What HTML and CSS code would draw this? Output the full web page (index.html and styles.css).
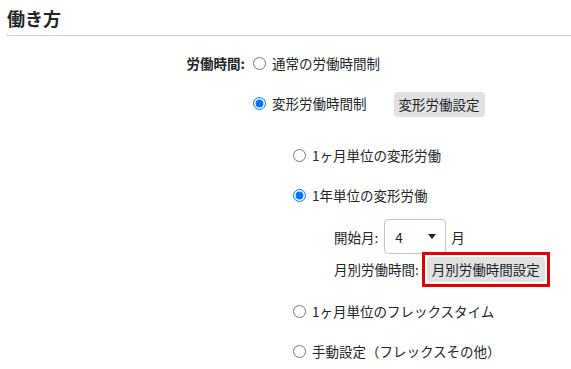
FILE: index.html
```html
<!DOCTYPE html>
<html lang="ja">
<head>
<meta charset="utf-8">
<link rel="stylesheet" href="styles.css">
</head>
<body>
<div class="page">
  <h2 class="title">働き方</h2>
  <div class="form">
    <div class="label">労働時間:</div>
    <div class="field">
      <label class="opt"><input type="radio" name="wt"><span>通常の労働時間制</span></label>
      <div class="opt">
        <label class="opt-inner"><input type="radio" name="wt" checked><span>変形労働時間制</span></label>
        <button class="btn btn-var">変形労働設定</button>
      </div>
      <div class="sub">
        <label class="opt"><input type="radio" name="vt"><span>1ヶ月単位の変形労働</span></label>
        <label class="opt"><input type="radio" name="vt" checked><span>1年単位の変形労働</span></label>
        <div class="detail">
          <div class="drow drow-start">
            <span class="dlabel">開始月:</span>
            <div class="select"><span>4</span><i class="caret"></i></div>
            <span class="unit">月</span>
          </div>
          <div class="drow drow-month">
            <span class="dlabel-m">月別労働時間:</span>
            <span class="highlight"><button class="btn">月別労働時間設定</button></span>
          </div>
        </div>
        <label class="opt"><input type="radio" name="vt"><span>1ヶ月単位のフレックスタイム</span></label>
        <label class="opt"><input type="radio" name="vt"><span>手動設定（フレックスその他）</span></label>
      </div>
    </div>
  </div>
</div>
</body>
</html>
```

FILE: styles.css
```css
html, body {
  margin: 0;
  padding: 0;
  background: #fff;
}
body {
  font-family: "Noto Sans CJK JP", "Noto Sans", sans-serif;
  font-size: 13.5px;
  color: #212529;
}
.page {
  padding: 0 0 0 6px;
}
.title {
  margin: 0;
  font-size: 18px;
  font-weight: bold;
  line-height: 24px;
  padding: 6px 0 5px 1px;
  border-bottom: 1px solid #cfcfcf;
}
.form {
  display: flex;
  padding-top: 7px;
}
.label {
  width: 239px;
  text-align: right;
  font-weight: bold;
  height: 40px;
  line-height: 40px;
  flex-shrink: 0;
}
.field {
  display: flex;
  flex-direction: column;
  padding-left: 8px;
}
.opt, .opt-inner {
  display: flex;
  align-items: center;
  height: 40px;
  gap: 6px;
}
.opt-inner {
  height: auto;
}
input[type="radio"] {
  margin: 0;
  width: 13px;
  height: 13px;
}
.btn {
  font-family: inherit;
  font-size: 13.5px;
  color: #212529;
  background: #e1e1e1;
  border: none;
  border-radius: 4px;
  height: 25px;
  padding: 0 5px;
  line-height: 25px;
  display: block;
}
.btn-var {
  margin-left: 21px;
  margin-top: 3px;
}
.sub {
  display: flex;
  flex-direction: column;
  padding-left: 40px;
  margin-top: 12px;
}
.detail {
  display: flex;
  flex-direction: column;
  padding-left: 41px;
}
.drow {
  display: flex;
  align-items: center;
}
.drow-start {
  height: 35px;
  margin-top: 4px;
}
.drow-month {
  height: 30px;
  margin-bottom: 7px;
}
.dlabel {
  margin-right: 6px;
}
.select {
  width: 62px;
  height: 35px;
  box-sizing: border-box;
  border: 1px solid #c4c4c4;
  border-radius: 4px;
  display: flex;
  align-items: center;
  justify-content: space-between;
  padding: 0 9px 0 10px;
}
.caret {
  width: 0;
  height: 0;
  border-left: 4px solid transparent;
  border-right: 4px solid transparent;
  border-top: 5px solid #222;
}
.unit {
  margin-left: 5px;
}
.highlight {
  margin-left: 3px;
  border: 3px solid #e00000;
  padding: 2px;
}
```
